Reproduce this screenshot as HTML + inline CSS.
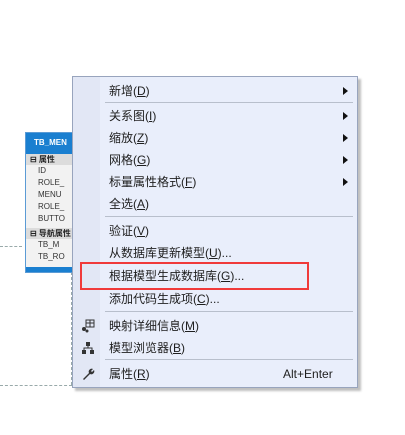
<!DOCTYPE html>
<html><head><meta charset="utf-8"><style>
body{margin:0;width:405px;height:435px;background:#fff;position:relative;overflow:hidden;font-family:"Liberation Sans","Noto Sans CJK SC",sans-serif;}
.ent{position:absolute;left:25px;top:132px;width:60px;height:139px;border:1px solid #5b9bd5;background:#f2f2f2;font-size:9px;color:#222;}
.ent .hd{height:21px;background:#1a7fd0;color:#fff;font-weight:bold;font-size:8px;line-height:20px;padding-left:8px}
.ent .sec{height:11px;background:#dcdcdc;line-height:11px;padding-left:4px;font-weight:bold;font-size:8px}
.ent .r{height:12px;line-height:12px;padding-left:12px;font-size:8px;color:#333}
.ent .ft{position:absolute;bottom:0;left:0;right:0;height:5px;background:#1a7fd0}
.menu{position:absolute;left:72px;top:76px;width:284px;height:310px;background:#e9eefb;border:1px solid #98a4bd;box-shadow:3px 3px 2px rgba(0,0,0,.25);}
.ic{position:absolute;left:0;top:0;bottom:0;width:27px;background:#e2e7f5}
.it{position:absolute;left:36px;font-size:12px;color:#1e1e1e;height:22px;line-height:22px;white-space:nowrap}
.ar{position:absolute;left:270px;width:0;height:0;border-left:5px solid #111;border-top:4px solid transparent;border-bottom:4px solid transparent}
.sep{position:absolute;left:32px;right:4px;height:1px;background:#b8bfcc}
u{text-decoration:underline}
</style></head><body>
<div style="position:absolute;left:0;top:246px;width:22px;border-top:1px dashed #9aa"></div>
<div style="position:absolute;left:0;top:385px;width:72px;border-top:1px dashed #9aa"></div>
<div style="position:absolute;left:71px;top:272px;height:113px;border-left:1px dashed #9aa"></div>
<div class="ent">
<div class="hd">TB_MEN</div>
<div class="sec">⊟ 属性</div>
<div class="r">ID</div><div class="r">ROLE_</div><div class="r">MENU</div><div class="r">ROLE_</div><div class="r">BUTTO</div>
<div class="sec" style="margin-top:3px">⊟ 导航属性</div>
<div class="r">TB_M</div><div class="r">TB_RO</div>
<div class="ft"></div>
</div>
<div class="menu">
<div class="ic"></div>
<div class="it" style="top:3px">新增(<u>D</u>)</div><div class="ar" style="top:10px"></div>
<div class="sep" style="top:25px"></div>
<div class="it" style="top:28px">关系图(<u>I</u>)</div><div class="ar" style="top:35px"></div>
<div class="it" style="top:50px">缩放(<u>Z</u>)</div><div class="ar" style="top:57px"></div>
<div class="it" style="top:72px">网格(<u>G</u>)</div><div class="ar" style="top:79px"></div>
<div class="it" style="top:94px">标量属性格式(<u>F</u>)</div><div class="ar" style="top:101px"></div>
<div class="it" style="top:116px">全选(<u>A</u>)</div>
<div class="sep" style="top:139px"></div>
<div class="it" style="top:143px">验证(<u>V</u>)</div>
<div class="it" style="top:165px">从数据库更新模型(<u>U</u>)...</div>
<div class="it" style="top:188px">根据模型生成数据库(<u>G</u>)...</div>
<div class="it" style="top:211px">添加代码生成项(<u>C</u>)...</div>
<div class="sep" style="top:234px"></div>
<div class="it" style="top:238px">映射详细信息(<u>M</u>)</div>
<div class="it" style="top:260px">模型浏览器(<u>B</u>)</div>
<div class="sep" style="top:282px"></div>
<div class="it" style="top:286px">属性(<u>R</u>)</div>
<div class="it" style="top:286px;left:210px">Alt+Enter</div>
<svg style="position:absolute;left:8px;top:242px" width="14" height="14"><rect x="5" y="1" width="8" height="7" fill="none" stroke="#333"/><line x1="5" y1="4" x2="13" y2="4" stroke="#333"/><line x1="9" y1="1" x2="9" y2="8" stroke="#333"/><circle cx="3" cy="10" r="2" fill="#333"/><circle cx="6" cy="12" r="1.5" fill="#333"/></svg>
<svg style="position:absolute;left:8px;top:264px" width="14" height="14"><rect x="5" y="1" width="4" height="4" fill="#333"/><rect x="1" y="9" width="4" height="4" fill="#333"/><rect x="9" y="9" width="4" height="4" fill="#333"/><path d="M7 5V7M3 9V7H11V9" stroke="#333" fill="none"/></svg>
<svg style="position:absolute;left:8px;top:290px" width="14" height="14"><path d="M2 12L8 6A3 3 0 0 1 12 2L10 4L11 5L13 3A3 3 0 0 1 9 7L3 13Z" fill="#333"/></svg>
</div>
<div style="position:absolute;left:80px;top:262px;width:225px;height:24px;border:2.5px solid #f03a3a"></div>
</body></html>
